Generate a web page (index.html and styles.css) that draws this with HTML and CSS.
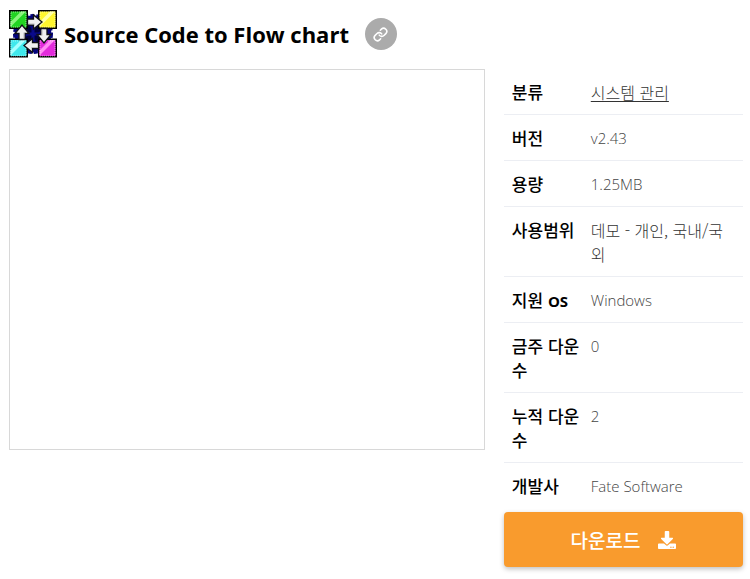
FILE: index.html
```
<!DOCTYPE html>
<html lang="ko">
<head>
<meta charset="utf-8">
<meta name="viewport" content="width=device-width, initial-scale=1">
<title>Source Code to Flow chart</title>
<link rel="stylesheet" href="styles.css">
</head>
<body>
<main class="page">
  <header class="title-bar">
    <svg class="app-icon" viewBox="0 0 48 48" aria-hidden="true">
      <defs>
        <path id="arrow" d="M-7-3H-1V-7L7.500 0 -1 7V3H-7Z"/>
      </defs>
      <circle cx="24" cy="24" r="18.500" fill="#05057c" stroke="#05057c" stroke-width="3" stroke-dasharray="4 2"/>
      <path d="M14 14 34 34M34 14 14 34" stroke="#00003c" stroke-width="6"/>
      <path d="M17 24h14M24 17v14" stroke="#0a0a8c" stroke-width="3"/>
      <g stroke="#000" stroke-width="1.5">
        <path fill="#22d522" d="M.75.75h17.500v17.500H.75z"/>
        <path fill="#fff62e" d="M29.750.75h17.500v17.500h-17.500z"/>
        <path fill="#40e8ec" d="M.75 29.250h17.500v17.500H.75z"/>
        <path fill="#e32bdc" d="M29.750 29.250h17.500v17.500h-17.500z"/>
      </g>
      <path fill="#8af57c" d="M12 1.500h5L1.500 17v-5z"/>
      <path fill="#ffffa8" d="M41 1.500h5L30.500 17v-5z"/>
      <path fill="#a4ffff" d="M12 30h5L1.500 45.500v-5z"/>
      <path fill="#ff8cf4" d="M41 30h5L30.500 45.500v-5z"/>
      <g fill="none" stroke="#fff" stroke-opacity=".5" stroke-dasharray="1 1">
        <path d="M2 2h15v15H2zM31 2h15v15H31zM2 31h15v15H2zM31 31h15v15H31z"/>
      </g>
      <g fill="#f0f0f0" stroke="#101018" stroke-width="1.300">
        <use href="#arrow" transform="translate(25.500 12)"/>
        <use href="#arrow" transform="translate(35 25.500) rotate(90)"/>
        <use href="#arrow" transform="translate(22.500 35.500) rotate(180)"/>
        <use href="#arrow" transform="translate(13 22.500) rotate(-90)"/>
      </g>
      <path fill="none" stroke="#b8b8bc" d="M19.500 14h6M33 19.500v6M28.500 37.500h-6M15 28.500v-6"/>
    </svg>
    <h1 class="title">Source Code to Flow chart</h1>
    <button class="link-button" type="button" aria-label="링크 복사">
      <svg class="link-icon" viewBox="0 0 24 24" aria-hidden="true">
        <path d="M10 13a5 5 0 0 0 7.54.54l3-3a5 5 0 0 0-7.07-7.07l-1.72 1.71"/>
        <path d="M14 11a5 5 0 0 0-7.54-.54l-3 3a5 5 0 0 0 7.07 7.07l1.71-1.71"/>
      </svg>
    </button>
  </header>
  <div class="content">
    <div class="preview"></div>
    <section class="details">
      <table class="specs">
        <tbody>
          <tr><th scope="row">분류</th><td><a class="category" href="#">시스템 관리</a></td></tr>
          <tr><th scope="row">버전</th><td class="latin">v2.43</td></tr>
          <tr><th scope="row">용량</th><td class="latin">1.25MB</td></tr>
          <tr><th scope="row">사용범위</th><td>데모 - 개인, 국내/국외</td></tr>
          <tr><th scope="row">지원 <b>OS</b></th><td class="latin">Windows</td></tr>
          <tr><th scope="row">금주 다운수</th><td class="latin">0</td></tr>
          <tr><th scope="row">누적 다운수</th><td class="latin">2</td></tr>
          <tr><th scope="row">개발사</th><td class="latin">Fate Software</td></tr>
        </tbody>
      </table>
      <button class="download" type="button">
        <span>다운로드</span>
        <svg class="download-icon" viewBox="0 0 512 512" aria-hidden="true">
          <path d="M216 0h80c13.300 0 24 10.700 24 24v168h87.700c17.800 0 26.700 21.500 14.100 34.100L269.700 378.300c-7.500 7.500-19.800 7.500-27.300 0L90.100 226.100c-12.600-12.600-3.700-34.100 14.100-34.100H192V24c0-13.300 10.700-24 24-24zm296 376v112c0 13.300-10.700 24-24 24H24c-13.300 0-24-10.700-24-24V376c0-13.300 10.700-24 24-24h146.700l49 49c20.100 20.100 52.500 20.100 72.600 0l49-49H488c13.300 0 24 10.700 24 24zm-124 88c0-11-9-20-20-20s-20 9-20 20 9 20 20 20 20-9 20-20zm64 0c0-11-9-20-20-20s-20 9-20 20 9 20 20 20 20-9 20-20z"/>
        </svg>
      </button>
    </section>
  </div>
</main>
</body>
</html>
```
FILE: styles.css
```
* {
  box-sizing: border-box;
}

body {
  margin: 0;
  background: #fff;
  color: #000;
  font: 16px/24px "Noto Sans CJK KR", sans-serif;
}

.page {
  padding: 10px 7px 8px 9px;
}

.title-bar {
  display: flex;
  align-items: center;
  margin-bottom: 11px;
}

.app-icon {
  width: 48px;
  height: 48px;
  margin-right: 7px;
}

.title {
  margin: 0;
  font: 700 22px/32px "Open Sans", "Noto Sans CJK KR", sans-serif;
}

.link-button {
  display: flex;
  align-items: center;
  justify-content: center;
  width: 32px;
  height: 32px;
  margin-left: 16px;
  padding: 0;
  border: 0;
  border-radius: 50%;
  background: #ababab;
}

.link-icon {
  width: 15px;
  height: 15px;
  fill: none;
  stroke: #fff;
  stroke-width: 2.5;
  stroke-linecap: round;
}

.content {
  display: grid;
  grid-template-columns: 199fr 100fr;
  gap: 19px;
  align-items: start;
}

.preview {
  aspect-ratio: 5 / 4;
  border: 1px solid #d8d8d8;
}

.specs {
  width: 100%;
  table-layout: fixed;
  border-spacing: 0;
}

.specs th,
.specs td {
  padding: 11px 8px 10px;
  border-bottom: 1px solid #eceef3;
  text-align: left;
  vertical-align: top;
}

.specs th {
  width: 33%;
  padding-right: 0;
  font-size: 17px;
  font-weight: 500;
}

.specs b {
  font: 700 15px/16px "Open Sans", sans-serif;
}

.specs td {
  color: #333;
  font-weight: 300;
}

.specs .latin {
  color: #444;
  font: 300 15px/24px "Open Sans", "Noto Sans CJK KR", sans-serif;
}

.specs tr:last-child > * {
  border-bottom-color: #fff;
}

.category {
  color: inherit;
  text-underline-offset: 2px;
}

.download {
  display: flex;
  align-items: center;
  justify-content: center;
  gap: 18px;
  width: 100%;
  height: 55px;
  margin-top: 3px;
  padding: 0;
  border: 0;
  border-radius: 4px;
  background: #f99b2d;
  box-shadow: 0 2px 5px rgba(0, 0, 0, 0.25);
  color: #fff;
  font: 500 19px/24px "Noto Sans CJK KR", sans-serif;
}

.download-icon {
  width: 18px;
  height: 18px;
  fill: #fff;
}
```
